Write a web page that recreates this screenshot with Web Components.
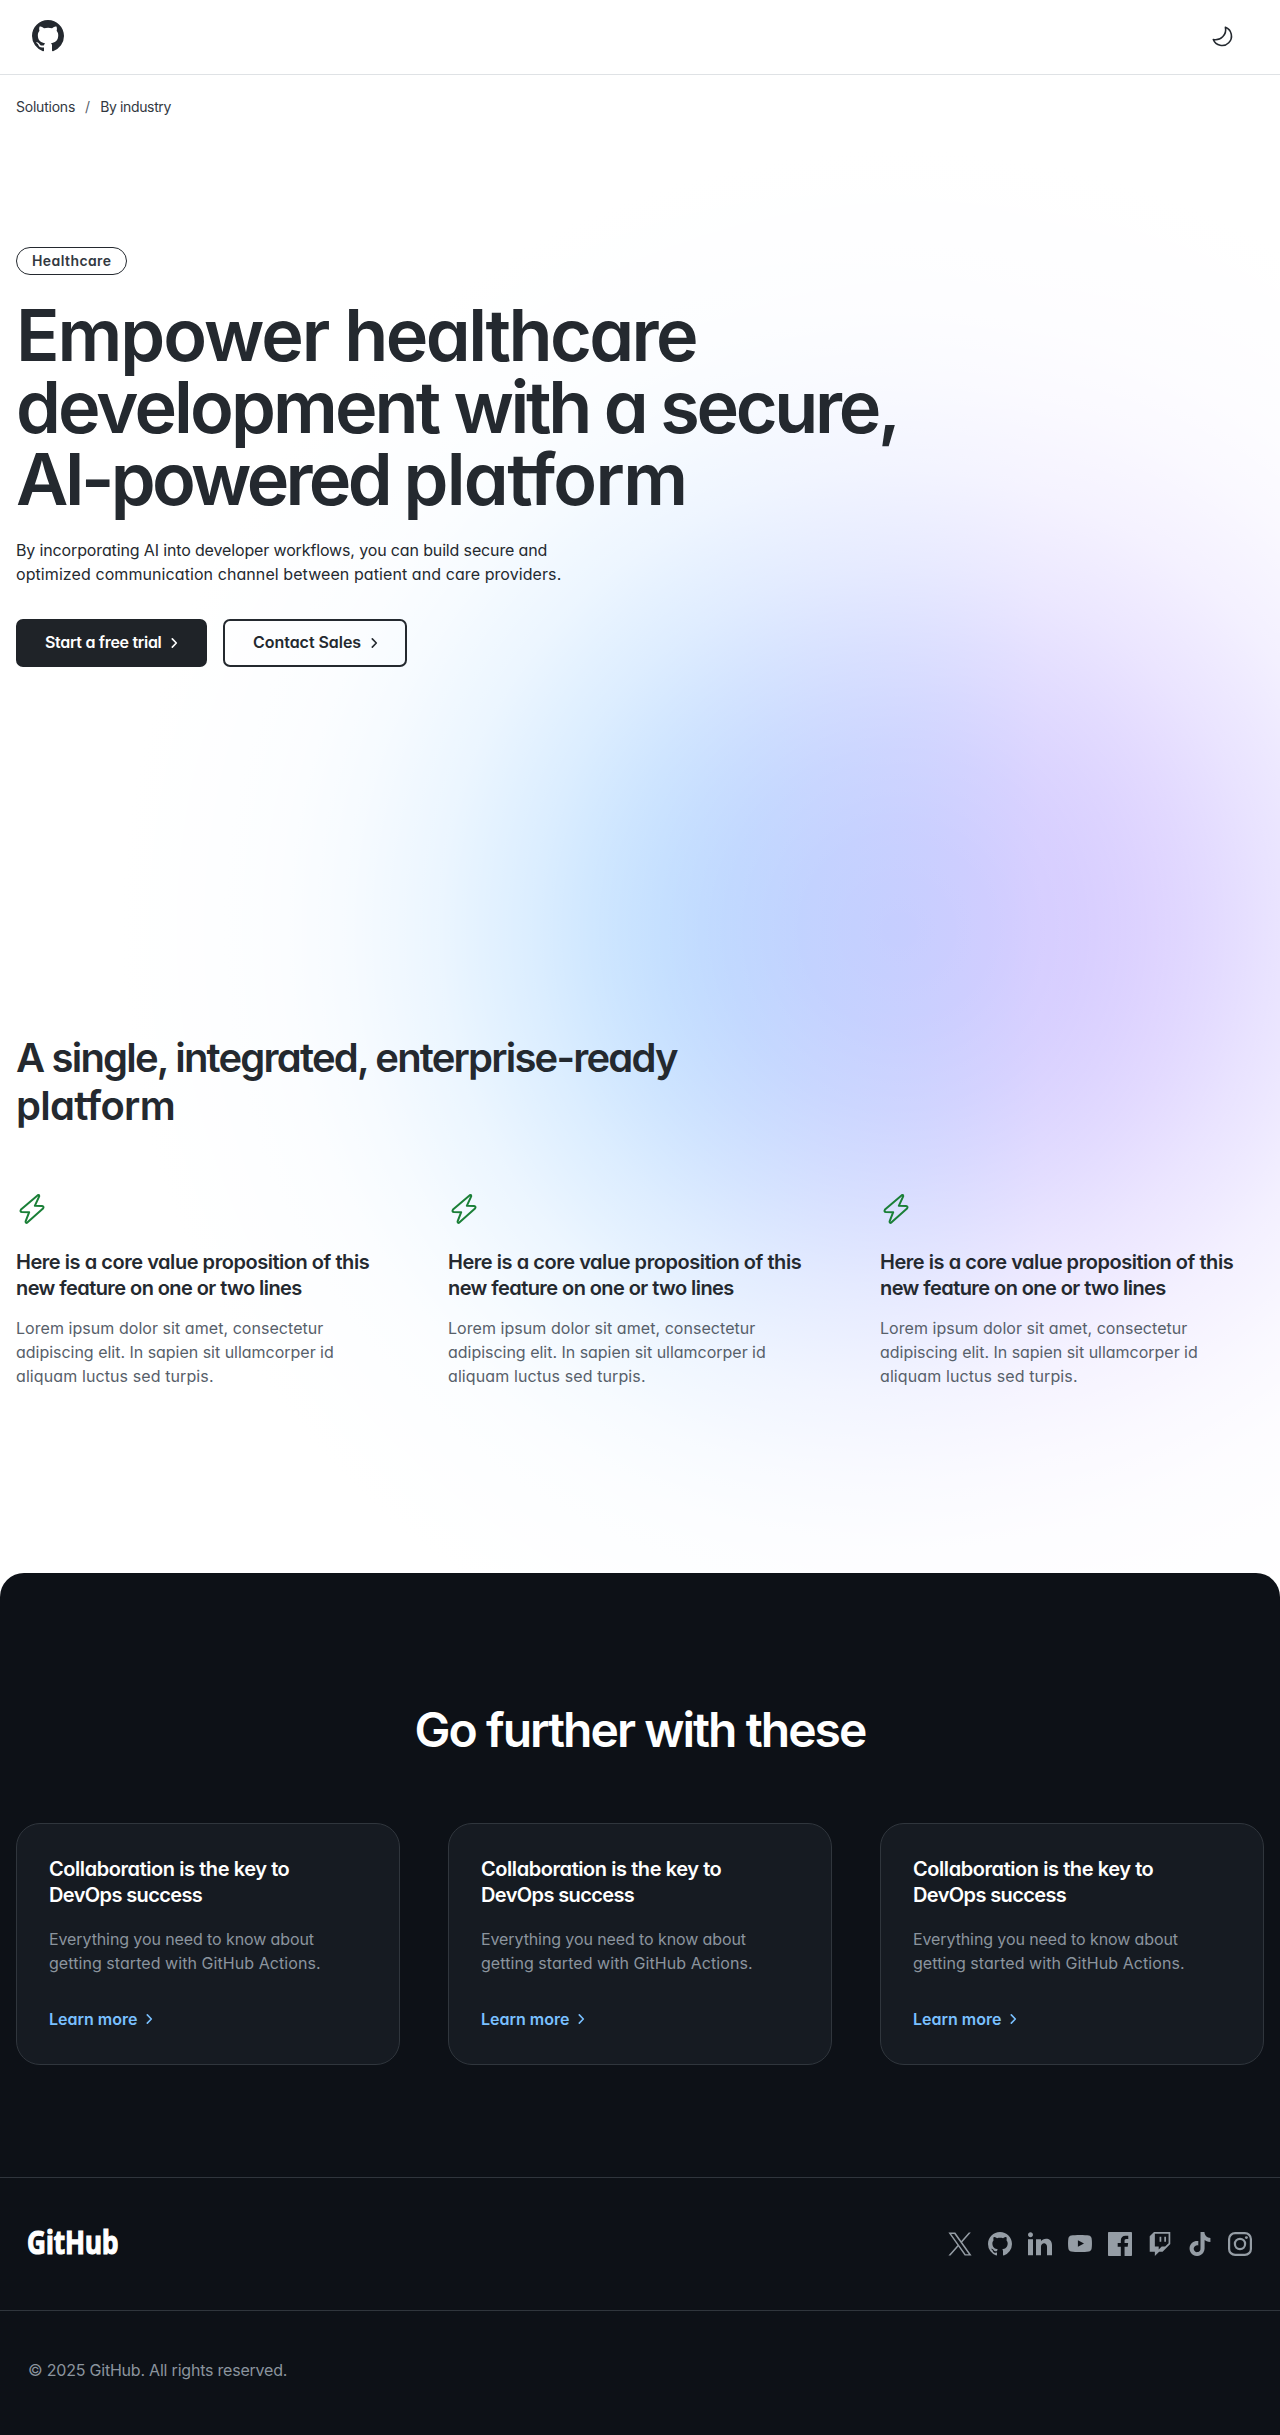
<!DOCTYPE html>
<html lang="en">
<head>
<meta charset="utf-8">
<title>Healthcare</title>
<style>
  body { margin: 0; background: #fff; color: #24292f; font-family: Inter, "Liberation Sans", sans-serif; font-feature-settings: "cv11"; }
</style>
</head>
<body>
<site-header></site-header>
<page-glow>
  <bread-crumbs></bread-crumbs>
  <hero-banner>
    <pill-label slot="label">Healthcare</pill-label>
    <text-line slot="title" track="-2.36"><span style="letter-spacing:-2.05px">Empower </span><span style="letter-spacing:-2.6px">healthcare</span></text-line>
    <text-line slot="title" track="-3.14"><span style="letter-spacing:-2.9px">development </span><span style="letter-spacing:-3.34px">with a secure,</span></text-line>
    <text-line slot="title" track="-2.88"><span style="letter-spacing:-3.7px">AI-powered </span><span style="letter-spacing:-1.65px">platform</span></text-line>
    <text-line slot="lead" track="-0.14">By incorporating AI into developer workflows, you can build secure and</text-line>
    <text-line slot="lead" track="0.08">optimized communication channel between patient and care providers.</text-line>
    <action-button slot="actions" primary track="-0.3">Start a free trial</action-button>
    <action-button slot="actions" track="-0.04">Contact Sales</action-button>
  </hero-banner>
  <value-section>
    <text-line slot="title" track="-1.8">A single, integrated, enterprise-ready</text-line>
    <text-line slot="title" track="-0.7">platform</text-line>
    <value-item></value-item>
    <value-item></value-item>
    <value-item></value-item>
  </value-section>
</page-glow>
<dark-area>
  <text-line slot="title" track="-1.97">Go further with these</text-line>
  <link-card></link-card>
  <link-card></link-card>
  <link-card></link-card>
</dark-area>
<site-footer></site-footer>

<script>
const define = (name, html, setup) => customElements.define(name, class extends HTMLElement {
  connectedCallback() {
    if (this.shadowRoot) return;
    this.attachShadow({ mode: 'open' }).innerHTML = html;
    if (setup) setup(this);
  }
});

const MARK = 'M8 0c4.42 0 8 3.58 8 8a8.013 8.013 0 0 1-5.45 7.59c-.4.08-.55-.17-.55-.38 0-.27.01-1.13.01-2.2 0-.75-.25-1.23-.54-1.48 1.78-.2 3.65-.88 3.65-3.95 0-.88-.31-1.59-.82-2.15.08-.2.36-1.02-.08-2.12 0 0-.67-.22-2.2.82-.64-.18-1.32-.27-2-.27-.68 0-1.36.09-2 .27-1.53-1.03-2.2-.82-2.2-.82-.44 1.1-.16 1.92-.08 2.12-.51.56-.82 1.28-.82 2.15 0 3.06 1.86 3.75 3.64 3.95-.23.2-.44.55-.51 1.07-.46.21-1.61.55-2.33-.66-.15-.24-.6-.83-1.23-.82-.67.01-.27.38.01.53.34.19.73.9.82 1.13.16.45.68 1.31 2.69.94 0 .67.01 1.3.01 1.49 0 .21-.15.45-.55.38A7.995 7.995 0 0 1 0 8c0-4.42 3.58-8 8-8Z';

/* One line of text with its own tracking, in px */
define('text-line', `<style>:host{display:block;white-space:nowrap}</style><slot></slot>`,
  el => { el.style.letterSpacing = (el.getAttribute('track') || 0) + 'px'; });

define('chevron-icon', `<style>:host{display:block;width:8px;height:10px}svg{display:block}</style>
  <svg width="8" height="10" viewBox="0 0 8 10" fill="none" stroke="currentColor" stroke-width="1.6" stroke-linecap="round" stroke-linejoin="round"><path d="M2.3 .9 6.3 5 2.3 9.1"/></svg>`);

define('site-header', `<style>
  :host{display:flex;align-items:flex-start;justify-content:space-between;box-sizing:border-box;height:75px;padding:20px 46px 0 32px;border-bottom:1px solid #dfe2e5;background:#fff}
  svg{display:block} .moon{margin-top:4px}
  </style>
  <svg width="32" height="32" viewBox="0 0 16 16" fill="#24292f"><path d="${MARK}"/></svg>
  <svg class="moon" width="24" height="24" viewBox="0 0 24 24" fill="none" stroke="#24292f" stroke-width="1.6" stroke-linejoin="round"><path d="M15.4 3.3A9.4 9.4 0 1 1 3.3 15.5 10.2 10.2 0 0 0 15.4 3.3Z"/></svg>`);

/* Soft radial glow: hue runs left to right, strength falls off from the centre */
define('page-glow', `<style>
  :host{display:block;height:1498px;background:
    radial-gradient(circle at 900px 855px,rgba(255,255,255,0) 0,rgba(255,255,255,.05) 100px,rgba(255,255,255,.15) 180px,rgba(255,255,255,.26) 235px,rgba(255,255,255,.39) 290px,rgba(255,255,255,.58) 365px,rgba(255,255,255,.78) 460px,rgba(255,255,255,.9) 550px,rgba(255,255,255,.96) 620px,rgba(255,255,255,.985) 700px,#fff 780px),
    linear-gradient(90deg,#a6d0ff 0,#a6d5ff 460px,#abd5ff 589px,#b0d4ff 664px,#c0d0ff 815px,#c8cdff 928px,#d2c9ff 1040px,#d0c1ff 1153px,#c8b9ff 1280px)}
  </style><slot></slot>`);

define('bread-crumbs', `<style>
  :host{display:flex;gap:10px;padding:20px 16px 0;font-size:14px;line-height:24px;color:#32383f}
  .a{letter-spacing:-.22px}.b{letter-spacing:-.36px}.s{color:#57606a}
  </style><span class="a">Solutions</span><span class="s">/</span><span class="b">By industry</span>`);

define('pill-label', `<style>
  :host{display:block;box-sizing:border-box;width:111px;height:28px;border:1px solid #24292f;border-radius:14px;padding-left:15px;font-size:14px;font-weight:600;line-height:26px;letter-spacing:.42px;color:#32383f}
  </style><slot></slot>`);

define('action-button', `<style>
  :host{display:flex;align-items:center;justify-content:space-between;box-sizing:border-box;width:184px;height:48px;padding:0 27px 0 28px;border:2px solid #24292f;border-radius:7px;font-size:16px;font-weight:600;line-height:20px;color:#24292f;white-space:nowrap}
  :host([primary]){width:191px;background:#1f2328;border-color:#1f2328;color:#fff;padding-left:27px}
  span{padding-bottom:2px}
  </style><span><slot></slot></span><chevron-icon></chevron-icon>`,
  el => { el.shadowRoot.querySelector('span').style.letterSpacing = (el.getAttribute('track') || 0) + 'px'; });

define('hero-banner', `<style>
  :host{display:flex;flex-direction:column;padding:128px 16px 0}
  h1{margin:24px 0 0;font-size:72px;font-weight:600;line-height:72px;color:#24292f}
  .lead{margin-top:23px;font-size:16px;font-weight:400;line-height:24px;color:#24292f}
  .actions{display:flex;gap:16px;margin-top:33px}
  </style>
  <slot name="label"></slot><h1><slot name="title"></slot></h1>
  <div class="lead"><slot name="lead"></slot></div>
  <div class="actions"><slot name="actions"></slot></div>`);

define('value-section', `<style>
  :host{display:block;padding:367px 16px 0}
  h2{margin:0;font-size:40px;font-weight:600;line-height:48px;color:#24292f}
  .grid{display:grid;grid-template-columns:repeat(3,1fr);gap:48px;margin-top:63px}
  </style><h2><slot name="title"></slot></h2><div class="grid"><slot></slot></div>`);

define('value-item', `<style>
  :host{display:block}
  svg{display:block}
  h3{margin:24px 0 0;font-size:20px;font-weight:600;line-height:26px;color:#24292f}
  p{margin:15px 0 0;font-size:16px;line-height:24px;color:#57606a}
  </style>
  <svg width="32" height="32" viewBox="16 13 32 32" fill="none" stroke="#1a7f37" stroke-width="2" stroke-linejoin="round"><path d="M37.8 15.2 21 29.6Q19.6 31.8 22 32L29.2 32.2 25.6 41.4Q25.6 43.6 27.3 42.6L43 28.6Q44.4 26.2 42 26L34.8 25.8 39.2 16.4Q39.4 14.2 37.8 15.2Z"/></svg>
  <h3><text-line track="-0.46">Here is a core value proposition of this</text-line><text-line track="-0.57">new feature on one or two lines</text-line></h3>
  <p><text-line track="0.05">Lorem ipsum dolor sit amet, consectetur</text-line><text-line track="-0.02">adipiscing elit. In sapien sit ullamcorper id</text-line><text-line track="0.1">aliquam luctus sed turpis.</text-line></p>`);

define('dark-area', `<style>
  :host{display:block;box-sizing:border-box;height:604px;padding:129px 16px 0;background:#0d1117;border-radius:24px 24px 0 0}
  h2{margin:0;text-align:center;font-size:48px;font-weight:600;line-height:56px;color:#fff}
  .grid{display:grid;grid-template-columns:repeat(3,1fr);gap:48px;margin-top:65px}
  </style><h2><slot name="title"></slot></h2><div class="grid"><slot></slot></div>`);

define('link-card', `<style>
  :host{display:block;box-sizing:border-box;height:242px;padding:32px;border:1px solid #30363d;border-radius:24px;background:#161b22}
  h3{margin:0;font-size:20px;font-weight:600;line-height:26px;color:#fff}
  p{margin:19px 0 0;font-size:16px;line-height:24px;color:#8b949e}
  a{display:flex;align-items:center;margin-top:32px;font-size:16px;font-weight:600;line-height:24px;color:#79c0ff}
  chevron-icon{margin-left:8px}
  </style>
  <h3><text-line track="-0.43">Collaboration is the key to</text-line><text-line track="-0.62">DevOps success</text-line></h3>
  <p><text-line track="-0.1">Everything you need to know about</text-line><text-line track="0.06">getting started with GitHub Actions.</text-line></p>
  <a><text-line track="0">Learn more</text-line><chevron-icon></chevron-icon></a>`);

define('social-links', `<style>:host{display:flex;gap:16px}svg{display:block;width:24px;height:24px;fill:#959da5}</style>
  <svg viewBox="0.6 0.6 22.8 22.8"><path fill-rule="evenodd" d="M14.095 10.316 22.286 1h-1.94l-7.116 8.088L7.551 1H1l8.59 12.231L1 23h1.94l7.51-8.543L16.449 23H23zM11.437 13.338l-.872-1.218-6.924-9.688h2.981l5.59 7.821.868 1.219 7.265 10.166h-2.981z"/></svg>
  <svg viewBox="0 0 16 16"><path d="${MARK}"/></svg>
  <svg viewBox="0 0.8 24 24"><path d="M4.98 3.5C4.98 4.88 3.87 6 2.5 6S.02 4.88.02 3.5 1.13 1 2.5 1s2.48 1.12 2.48 2.5zM5 8H0v16h5zm7.982 0H8.014v16h4.969v-8.399c0-4.67 6.029-5.052 6.029 0V24H24V13.869c0-7.88-8.922-7.593-11.018-3.714z"/></svg>
  <svg viewBox="0 0 24 24"><path fill-rule="evenodd" d="M12 3c3.6 0 6.9.2 8.8.5 1.5.2 2.5 1.3 2.8 2.8.5 3.4.5 7.1 0 10.5-.3 1.5-1.3 2.5-2.8 2.7-4.5.7-13.1.7-17.6 0C1.7 19.3.7 18.3.4 16.8c-.5-3.4-.5-7.1 0-10.5C.7 4.8 1.7 3.7 3.2 3.5 5.1 3.2 8.4 3 12 3ZM9.9 8.3v6.4L16 11.5Z"/></svg>
  <svg viewBox="0 0 24 24"><path d="M23.2 0H.8C.3 0 0 .3 0 .8v22.4c0 .5.3.8.8.8h12.018v-9.294H9.689v-3.621h3.129V8.41c0-3.099 1.894-4.785 4.659-4.785 1.325 0 2.464.097 2.796.141v3.24h-1.921c-1.5 0-1.792.721-1.792 1.771v2.311h3.584l-.465 3.63H16.56V24h6.64c.5 0 .8-.3.8-.8V.8c0-.5-.3-.8-.8-.8z"/></svg>
  <svg viewBox="0 0 24 24"><path fill-rule="evenodd" d="M11.571 4.714h1.715v5.143H11.57zm4.715 0H18v5.143h-1.714zM6 0 1.714 4.286v15.428h5.143V24l4.286-4.286h3.428L22.286 12V0zm14.571 11.143-3.428 3.428h-3.429l-3 3v-3H6.857V1.714h13.714Z"/></svg>
  <svg viewBox="0 0 24 24"><path d="M12.525.02c1.31-.02 2.61-.01 3.91-.02.08 1.53.63 3.09 1.75 4.17 1.12 1.11 2.7 1.62 4.24 1.79v4.03c-1.44-.05-2.89-.35-4.2-.97-.57-.26-1.1-.59-1.62-.93-.01 2.92.01 5.84-.02 8.75-.08 1.4-.54 2.79-1.35 3.94-1.31 1.92-3.58 3.17-5.91 3.21-1.43.08-2.86-.31-4.08-1.03-2.02-1.19-3.44-3.37-3.65-5.71-.02-.5-.03-1-.01-1.49.18-1.9 1.12-3.72 2.58-4.96 1.66-1.44 3.98-2.13 6.15-1.72.02 1.48-.04 2.96-.04 4.44-.99-.32-2.15-.23-3.02.37-.63.41-1.11 1.04-1.36 1.75-.21.51-.15 1.07-.14 1.61.24 1.64 1.82 3.02 3.5 2.87 1.12-.01 2.19-.66 2.77-1.61.19-.33.4-.67.41-1.06.1-1.79.06-3.57.07-5.36.01-4.03-.01-8.05.02-12.07z"/></svg>
  <svg viewBox="0 0 24 24"><rect x="1.1" y="1.1" width="21.8" height="21.8" rx="6" fill="none" stroke="#959da5" stroke-width="2.2"/><circle cx="12" cy="12" r="5.1" fill="none" stroke="#959da5" stroke-width="2.2"/><circle cx="18.4" cy="5.6" r="1.45"/></svg>`);

define('site-footer', `<style>
  :host{display:block;background:#0d1117}
  .top{display:flex;justify-content:space-between;align-items:flex-start;box-sizing:border-box;height:133px;padding:54px 28px 0;border-top:1px solid #30363d}
  .bottom{box-sizing:border-box;height:125px;padding:47px 28px 0;border-top:1px solid #30363d;font-size:16px;line-height:24px;letter-spacing:-.21px;color:#8b949e}
  .logo{display:block;margin-top:-4px;overflow:visible}
  </style>
  <div class="top">
    <svg class="logo" width="92" height="30" viewBox="0 0 92 30"><text x="-1" y="25.5" textLength="91.5" lengthAdjust="spacingAndGlyphs" fill="#fff" stroke="#fff" stroke-width="1.2" font-family="'Noto Sans','Open Sans',sans-serif" font-weight="700" font-size="32">GitHub</text></svg>
    <social-links></social-links>
  </div>
  <div class="bottom">© 2025 GitHub. All rights reserved.</div>`);
</script>
</body>
</html>
